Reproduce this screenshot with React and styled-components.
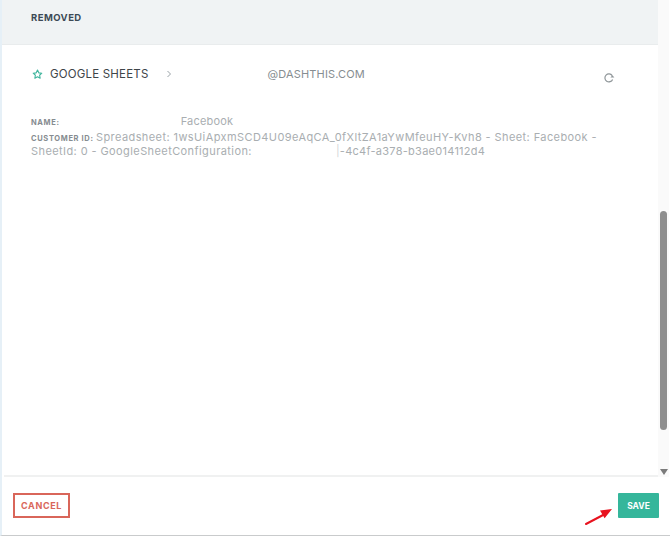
import React from 'react'
import styled, { createGlobalStyle } from 'styled-components'

const GlobalStyle = createGlobalStyle`
    html, body {
        margin: 0;
        padding: 0;
        background: #ffffff;
    }
    body {
        font-family: Inter, "Open Sans", "Liberation Sans", sans-serif;
    }
`

export default function App() {
    return (
        <Page>
            <GlobalStyle />
            <EdgeMark />
            <Upper>
                <Content>
                    <Banner>REMOVED</Banner>
                    <SourceRow>
                        <StarIcon />
                        <SourceName>GOOGLE SHEETS</SourceName>
                        <Chevron />
                        <Account>@DASHTHIS.COM</Account>
                        <RefreshIcon />
                    </SourceRow>
                    <Details>
                        <NameLine>
                            <Label>NAME:</Label>
                            <NameValue>Facebook</NameValue>
                        </NameLine>
                        <IdBlock>
                            <Label>CUSTOMER ID: </Label>
                            Spreadsheet: 1wsUiApxmSCD4U09eAqCA_0fXltZA1aYwMfeuHY-Kvh8 - Sheet: Facebook -
                            <br />
                            SheetId: 0 - GoogleSheetConfiguration:
                            <Redacted />
                            <Tail><Pipe>|</Pipe>-4c4f-a378-b3ae014112d4</Tail>
                        </IdBlock>
                    </Details>
                    <FooterRule />
                </Content>
                <Scrollbar>
                    <Thumb />
                    <ArrowDown />
                </Scrollbar>
            </Upper>
            <Footer>
                <CancelButton>CANCEL</CancelButton>
                <SaveButton>SAVE</SaveButton>
                <RedArrow />
            </Footer>
        </Page>
    )
}

function StarIcon() {
    return (
        <StarSvg viewBox="0 0 12 12">
            <path
                d="M6 1.2l1.4 3 3.3.4-2.4 2.2.6 3.2L6 8.5l-2.9 1.5.6-3.2-2.4-2.2 3.3-.4z"
                fill="none"
                stroke="#3fb59d"
                strokeWidth="1.2"
                strokeLinejoin="round"
            />
        </StarSvg>
    )
}

function Chevron() {
    return (
        <ChevronSvg viewBox="0 0 6 8">
            <path d="M1.5 1l3 3-3 3" fill="none" stroke="#9aa3a8" strokeWidth="1" />
        </ChevronSvg>
    )
}

function RefreshIcon() {
    return (
        <RefreshSvg viewBox="0 0 12 12">
            <path
                d="M9.6 7.4A4 4 0 1 1 9.2 3.6"
                fill="none"
                stroke="#8f9699"
                strokeWidth="1.2"
            />
            <path d="M7.4 5.6h4l-2-2.4z" fill="#8f9699" />
        </RefreshSvg>
    )
}

function RedArrow() {
    return (
        <ArrowSvg viewBox="0 0 28 18">
            <path d="M1 17L20 7" stroke="#e8131f" strokeWidth="2" strokeLinecap="round" />
            <path d="M27 2L15 3.6l4.6 7.6z" fill="#e8131f" />
        </ArrowSvg>
    )
}

const Page = styled.div`
    position: relative;
    display: flex;
    flex-direction: column;
    box-sizing: border-box;
    width: 670px;
    height: 536px;
    overflow: hidden;
    border-left: 2px solid #e6f0f7;
    border-bottom: 1px solid #c9cbcc;
    background: #ffffff;
`

const EdgeMark = styled.div`
    position: absolute;
    left: -2px;
    top: 249px;
    width: 2px;
    height: 7px;
    background: #3a3f42;
`

const Upper = styled.div`
    display: flex;
    height: 477px;
`

const Content = styled.div`
    flex: 1;
    min-width: 0;
    display: flex;
    flex-direction: column;
`

const Banner = styled.div`
    box-sizing: border-box;
    height: 45px;
    padding: 12px 0 0 29px;
    background: #f0f3f4;
    border-bottom: 1px solid #e9eced;
    font-size: 9.5px;
    line-height: 12px;
    font-weight: 700;
    letter-spacing: 0.45px;
    color: #3c4a55;
`

const SourceRow = styled.div`
    display: flex;
    align-items: center;
    height: 30px;
    margin-top: 14px;
    padding-left: 30px;
`

const StarSvg = styled.svg`
    width: 11px;
    height: 11px;
    margin-right: 7px;
`

const SourceName = styled.span`
    font-size: 11.5px;
    letter-spacing: 0.2px;
    color: #3e4549;
`

const ChevronSvg = styled.svg`
    width: 6px;
    height: 8px;
    margin-left: 17px;
`

const Account = styled.span`
    margin-left: 96px;
    font-size: 11px;
    letter-spacing: 0.15px;
    color: #868d91;
`

const RefreshSvg = styled.svg`
    width: 12px;
    height: 12px;
    margin: 8px 0 0 238px;
`

const Details = styled.div`
    padding: 25px 0 0 29px;
`

const NameLine = styled.div`
    display: flex;
    align-items: baseline;
    height: 17px;
`

const Label = styled.span`
    font-size: 7.5px;
    font-weight: 700;
    letter-spacing: 0.65px;
    color: #868c90;
`

const NameValue = styled.span`
    margin-left: 121px;
    font-size: 11px;
    letter-spacing: 0.2px;
    color: #a9aeb1;
`

const IdBlock = styled.div`
    width: 620px;
    font-size: 11px;
    line-height: 12px;
    letter-spacing: 0.41px;
    white-space: nowrap;
    color: #a9aeb1;
`

const Redacted = styled.span`
    display: inline-block;
    width: 84px;
`

const Tail = styled.span`
    letter-spacing: 0.27px;
`

const Pipe = styled.span`
    color: #d3d6d8;
`

const FooterRule = styled.div`
    margin: auto 0 0 2px;
    height: 2px;
    background: #f0f1f1;
`

const Scrollbar = styled.div`
    display: flex;
    flex-direction: column;
    align-items: center;
    box-sizing: border-box;
    width: 11px;
    margin-right: 1px;
    padding-top: 211px;
    background: #fafafa;
`

const Thumb = styled.div`
    width: 7px;
    height: 219px;
    border-radius: 4px;
    background: #8e8e8e;
`

const ArrowDown = styled.div`
    margin-top: 39px;
    border-left: 4px solid transparent;
    border-right: 4px solid transparent;
    border-top: 6px solid #7b7b7b;
`

const Footer = styled.div`
    position: relative;
    flex: 1;
    display: flex;
    align-items: center;
    justify-content: space-between;
    margin-left: 2px;
    padding: 0 11px 1px 9px;
`

const CancelButton = styled.button`
    box-sizing: border-box;
    width: 57px;
    height: 25px;
    padding: 0;
    background: #ffffff;
    border: 2px solid #d9665a;
    font-family: inherit;
    font-size: 9px;
    font-weight: 700;
    letter-spacing: 0.6px;
    color: #d9665a;
`

const SaveButton = styled.button`
    box-sizing: border-box;
    width: 41px;
    height: 25px;
    padding: 0;
    background: #35b69b;
    border: 0;
    border-radius: 1px;
    font-family: inherit;
    font-size: 8.5px;
    font-weight: 700;
    color: #ffffff;
`

const ArrowSvg = styled.svg`
    position: absolute;
    left: 581px;
    top: 30px;
    width: 28px;
    height: 18px;
`
